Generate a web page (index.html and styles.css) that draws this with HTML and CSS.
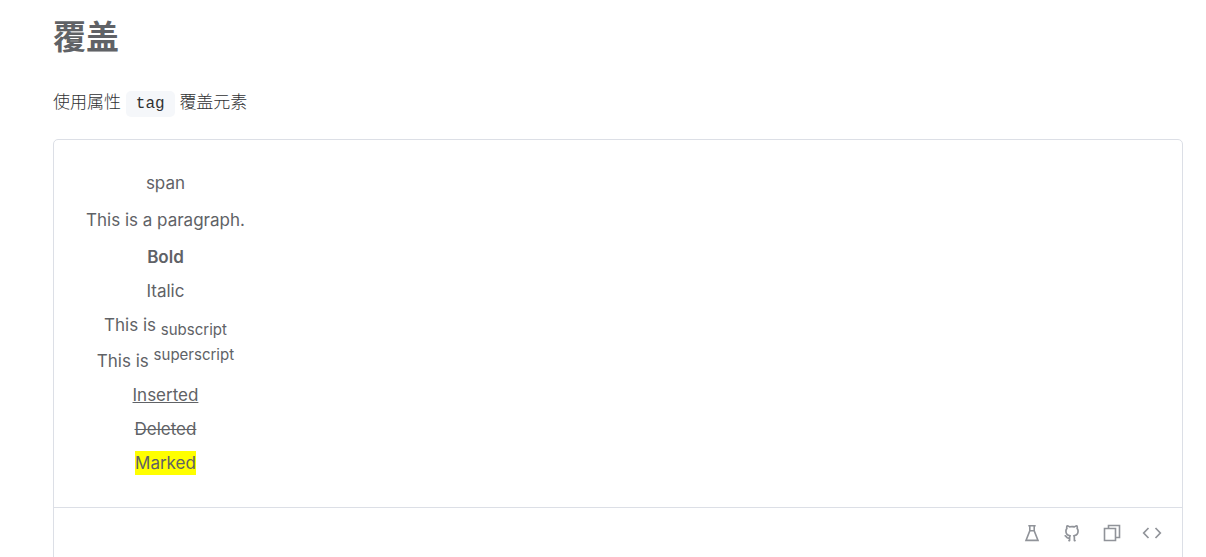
FILE: index.html
```html
<!DOCTYPE html>
<html lang="zh-CN">
  <head>
    <meta charset="UTF-8" />
    <meta name="viewport" content="width=device-width, initial-scale=1.0" />
    <title>Text 文本</title>
    <link rel="stylesheet" href="styles.css">
  </head>
  <body>
    <main class="doc-content">
      <h2>覆盖</h2>
      <p class="description">使用属性 <code>tag</code> 覆盖元素</p>

      <div class="example">
        <div class="showcase">
          <div class="text-list">
            <span class="text">span</span>
            <p class="text paragraph">This is a paragraph.</p>
            <b class="text">Bold</b>
            <i class="text italic">Italic</i>
            <span class="text">This is <sub>subscript</sub></span>
            <span class="text">This is <sup>superscript</sup></span>
            <ins class="text">Inserted</ins>
            <del class="text">Deleted</del>
            <mark class="text">Marked</mark>
          </div>
        </div>

        <div class="toolbar">
          <button type="button" class="tool-btn" aria-label="在 Playground 中编辑">
            <svg viewBox="0 0 20 20" fill="none" stroke="currentColor" stroke-width="1.6">
              <path d="M6.3 2.8h7.4M7.8 2.8v5L4 17.4h12L12.2 7.8v-5M7.8 7.8h4.4" />
            </svg>
          </button>
          <a class="tool-btn" href="#" aria-label="在 GitHub 中编辑">
            <svg viewBox="0 0 24 24" fill="currentColor">
              <path d="M5.884 18.653c-.3-.2-.558-.455-.86-.816a50.59 50.59 0 0 1-.466-.579c-.463-.575-.755-.841-1.056-.95a1 1 0 1 1 .675-1.882c.752.27 1.261.735 1.947 1.588-.094-.117.34.427.433.539.19.227.33.365.44.438.204.137.588.196 1.15.14.024-.382.094-.753.202-1.096-2.968-.725-4.648-2.64-4.648-6.396 0-1.24.37-2.356 1.058-3.292-.218-.894-.185-1.975.302-3.192a1 1 0 0 1 .63-.582c.081-.024.127-.035.208-.047.803-.124 1.937.17 3.415 1.096a11.73 11.73 0 0 1 2.687-.308c.912 0 1.819.104 2.684.308 1.477-.933 2.614-1.227 3.422-1.096.085.013.158.03.218.05a1 1 0 0 1 .616.58c.487 1.216.52 2.296.302 3.19.691.936 1.058 2.045 1.058 3.293 0 3.757-1.674 5.665-4.642 6.392.125.415.19.878.19 1.38 0 .665-.002 1.299-.007 2.01 0 .19-.002.394-.005.706a1 1 0 0 1-.018 1.958c-1.14.227-1.984-.532-1.984-1.525l.002-.447.005-.705c.005-.707.008-1.337.008-1.997 0-.697-.184-1.152-.426-1.361-.661-.57-.326-1.654.541-1.751 2.966-.333 4.336-1.482 4.336-4.66 0-.955-.312-1.744-.913-2.404A1 1 0 0 1 17.2 6.19c.166-.414.236-.957.095-1.614l-.01.003c-.491.139-1.11.44-1.858.949a1 1 0 0 1-.833.135 9.626 9.626 0 0 0-2.592-.349c-.89 0-1.772.118-2.592.35a1 1 0 0 1-.829-.134c-.753-.507-1.374-.807-1.87-.947-.143.653-.072 1.194.093 1.607a1 1 0 0 1-.189 1.045c-.597.655-.913 1.458-.913 2.404 0 3.172 1.371 4.328 4.322 4.66.865.097 1.202 1.177.545 1.748-.193.168-.43.732-.43 1.364v3.15c0 .985-.834 1.725-1.96 1.528a1 1 0 0 1-.04-1.962v-.99c-.91.061-1.661-.088-2.254-.485z" />
            </svg>
          </a>
          <button type="button" class="tool-btn" aria-label="复制代码">
            <svg viewBox="0 0 20 20" fill="none" stroke="currentColor" stroke-width="1.6">
              <path d="M6.5 5.5V2.5h11v12h-4M2.5 5.5h11v12h-11z" />
            </svg>
          </button>
          <button type="button" class="tool-btn" aria-label="查看源代码">
            <svg viewBox="0 0 20 20" fill="none" stroke="currentColor" stroke-width="1.7">
              <path d="M6.5 5L1.7 10l4.8 5M13.5 5l4.8 5-4.8 5" />
            </svg>
          </button>
        </div>
      </div>
    </main>
  </body>
</html>
```

FILE: styles.css
```css
body {
  margin: 0;
  background-color: white;
  color: #303133;
  font-family: Inter, "Noto Sans CJK SC", sans-serif;
  font-size: 17px;
}
.doc-content {
  padding: 13px 23px 0 53px;
}
h2 {
  margin: 0;
  color: #606266;
  font-size: 33px;
  font-weight: 700;
  line-height: 48px;
}
.description {
  margin: 26px 0 20px;
  font-weight: 300;
  line-height: 30px;
}
code {
  padding: 4px 10px;
  border-radius: 5px;
  background-color: #f5f7fa;
  font-family: "Liberation Mono", monospace;
  font-size: 16px;
}
.example {
  padding-bottom: 10px;
  border: 1px solid #dcdfe6;
  border-radius: 5px;
}
.showcase {
  display: flex;
  padding: 31px 32px 32px;
}
.text-list {
  display: flex;
  flex-direction: column;
  align-items: center;
  gap: 10px;
}
.text {
  color: #606266;
  font-size: 17px;
  line-height: 24px;
}
.paragraph {
  margin: 3px 0;
}
b.text {
  font-weight: 600;
}
.italic {
  font-style: normal;
}
sub,
sup {
  font-size: 15px;
  line-height: 1;
}
mark {
  background-color: yellow;
}
.toolbar {
  display: flex;
  align-items: center;
  justify-content: flex-end;
  gap: 20px;
  height: 50px;
  padding: 0 20px;
  border-top: 1px solid #dcdfe6;
}
.tool-btn {
  display: flex;
  padding: 0;
  border: none;
  background: none;
  color: #909399;
  cursor: pointer;
}
.tool-btn svg {
  width: 20px;
  height: 20px;
}
```
